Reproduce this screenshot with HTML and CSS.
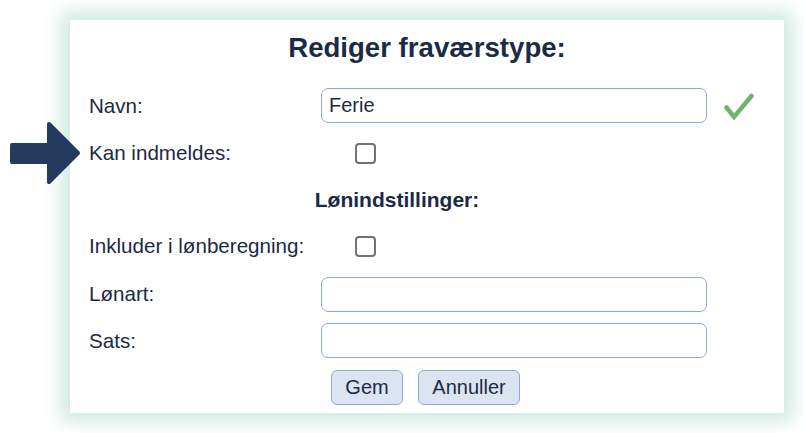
FILE: index.html
```html
<!DOCTYPE html>
<html lang="da">
<head>
<meta charset="utf-8">
<title>Rediger fraværstype</title>
<link rel="stylesheet" href="styles.css">
</head>
<body>
<div class="stage">
  <svg class="pointer" width="72" height="64" viewBox="0 0 72 64">
    <path d="M3 24 H40 V3 L69 32 L40 61 V41 H3 Z" fill="#253b5d" stroke="#253b5d" stroke-width="4" stroke-linejoin="round"/>
  </svg>
  <div class="panel">
    <h1 class="title">Rediger fraværstype:</h1>
    <div class="row row-name">
      <label class="label">Navn:</label>
      <input class="field" type="text" value="Ferie">
      <svg class="ok" width="30" height="28" viewBox="0 0 30 28">
        <path d="M2.5 14.5 L10 24 L27.5 3" fill="none" stroke="#6cb56c" stroke-width="4.5" stroke-linecap="round" stroke-linejoin="miter"/>
      </svg>
    </div>
    <div class="row row-kan">
      <label class="label">Kan indmeldes:</label>
      <span class="box"></span>
    </div>
    <div class="section">Lønindstillinger:</div>
    <div class="row row-ink">
      <label class="label">Inkluder i lønberegning:</label>
      <span class="box"></span>
    </div>
    <div class="row row-lon">
      <label class="label">Lønart:</label>
      <input class="field" type="text">
    </div>
    <div class="row row-sats">
      <label class="label">Sats:</label>
      <input class="field" type="text">
    </div>
    <div class="actions">
      <button class="btn btn-gem">Gem</button>
      <button class="btn btn-ann">Annuller</button>
    </div>
  </div>
</div>
</body>
</html>
```
FILE: styles.css
```css
* { box-sizing: border-box; }
html, body {
  margin: 0;
  padding: 0;
  background: #ffffff;
  width: 804px;
  height: 433px;
  overflow: hidden;
  font-family: "Liberation Sans", Arial, sans-serif;
  color: #1b2a45;
}
.stage {
  position: relative;
  padding: 20px 0 0 70px;
  height: 433px;
}
.pointer {
  position: absolute;
  left: 9px;
  top: 121px;
}
.panel {
  width: 714px;
  height: 393px;
  background: #fff;
  box-shadow: 0 0 18px 9px #cfe9e2;
  padding: 0 0 0 19px;
}
.title {
  margin: 0;
  padding-top: 14px;
  height: 66px;
  line-height: 28px;
  font-size: 27.6px;
  font-weight: bold;
  text-align: center;
  padding-right: 19px;
  color: #1b2a45;
}
.row {
  display: flex;
  align-items: center;
}
.label {
  width: 232px;
  font-size: 20.6px;
  color: #1b2a45;
}
.row-name { height: 39px; }
.row-kan { height: 56px; }
.row-ink { height: 54px; }
.row-lon { height: 42px; }
.row-sats { height: 51px; }
.field {
  width: 386px;
  height: 35px;
  border: 1px solid #8daadb;
  border-radius: 7px;
  padding: 0 7px;
  font-family: "Liberation Sans", Arial, sans-serif;
  font-size: 20px;
  color: #1b2a45;
  background: #fff;
  outline: none;
}
.ok {
  margin-left: 17px;
  margin-top: 2px;
}
.box {
  display: block;
  margin-left: 34px;
  width: 21px;
  height: 21px;
  border: 2px solid #737373;
  border-radius: 4px;
  background: #fff;
}
.section {
  height: 38px;
  line-height: 38px;
  text-align: center;
  font-weight: bold;
  font-size: 21px;
  padding-right: 60px;
  margin-left: -19px;
}
.actions {
  height: 43px;
  display: flex;
  align-items: center;
  gap: 15px;
  padding-left: 242px;
}
.btn {
  height: 35px;
  border: 1px solid #8daadb;
  border-radius: 6px;
  background: #dbe5f2;
  font-family: "Liberation Sans", Arial, sans-serif;
  font-size: 20px;
  color: #1b2a45;
  padding: 0;
}
.btn-gem { width: 72px; }
.btn-ann { width: 102px; }
```
